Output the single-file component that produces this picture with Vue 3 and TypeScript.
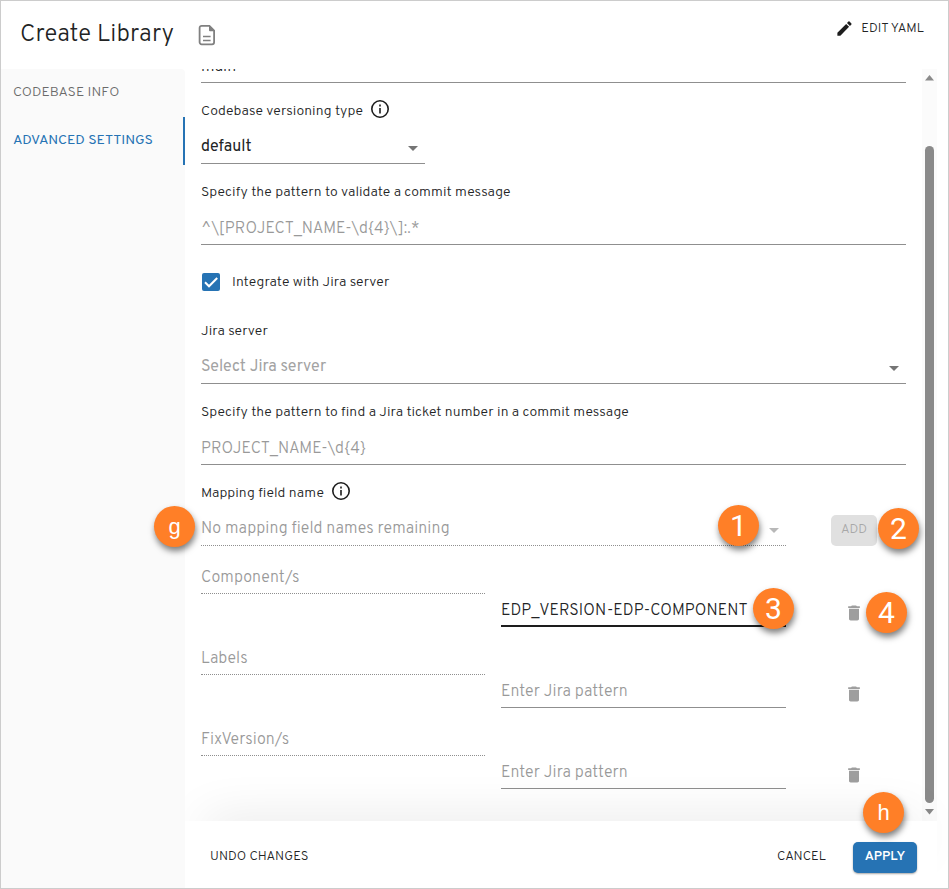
<script setup lang="ts">
import { ref } from 'vue'

interface Mapping {
  name: string
  pattern: string
  focused: boolean
}

interface Marker {
  id: string
  text: string
  letter: boolean
}

const PENCIL =
  'M3 17.25V21h3.75L17.81 9.94l-3.75-3.75L3 17.25zM20.71 7.04c.39-.39.39-1.02 0-1.41l-2.34-2.34a.9959.9959 0 0 0-1.41 0l-1.83 1.83 3.75 3.75 1.83-1.83z'
const TRASH = 'M6 19c0 1.1.9 2 2 2h8c1.1 0 2-.9 2-2V7H6v12zM19 4h-3.5l-1-1h-5l-1 1H5v2h14V4z'

const mappings = ref<Mapping[]>([
  { name: 'Component/s', pattern: 'EDP_VERSION-EDP-COMPONENT', focused: true },
  { name: 'Labels', pattern: '', focused: false },
  { name: 'FixVersion/s', pattern: '', focused: false },
])

const markers: Marker[] = [
  { id: 'g', text: 'g', letter: true },
  { id: 'one', text: '1', letter: false },
  { id: 'two', text: '2', letter: false },
  { id: 'three', text: '3', letter: false },
  { id: 'four', text: '4', letter: false },
  { id: 'h', text: 'h', letter: true },
]
</script>

<template>
  <div class="dialog">
    <header class="header">
      <h1 class="title">Create Library</h1>
      <svg class="doc" viewBox="0 0 18 22">
        <path
          class="doc-outline"
          d="M3.6 1.9h7.7l4.8 4.8v11.6a2 2 0 0 1-2 2H3.6a2 2 0 0 1-2-2V3.9a2 2 0 0 1 2-2z"
        />
        <path class="doc-fold" d="M11 1.2h.8l5 5.2v.9H12a1 1 0 0 1-1-1z" />
        <path class="doc-lines" d="M5 12.5h7.6M5 16.5h7.6" />
      </svg>
      <button class="edit">
        <svg class="pencil" viewBox="0 0 24 24"><path :d="PENCIL" /></svg>
        <span>EDIT YAML</span>
      </button>
    </header>

    <div class="body">
      <nav class="tabs">
        <button class="tab">CODEBASE INFO</button>
        <button class="tab active">ADVANCED SETTINGS</button>
      </nav>

      <main class="main">
        <div class="scroll">
          <form class="form">
            <div class="clipped"><div class="control">main</div></div>

            <div class="field">
              <div class="label">
                Codebase versioning type
                <svg class="info" viewBox="0 0 20 20">
                  <circle cx="10" cy="10" r="8.2" />
                  <path d="M10 9v5.5M10 5.6v1.8" />
                </svg>
              </div>
              <div class="control select short">default<i class="caret" /></div>
            </div>

            <div class="field">
              <div class="label">Specify the pattern to validate a commit message</div>
              <div class="control hint">^\[PROJECT_NAME-\d{4}\]:.*</div>
            </div>

            <div class="check">
              <svg class="box" viewBox="0 0 18 18">
                <rect width="18" height="18" rx="2" />
                <path d="M3 9.3l4 4 8.2-8.3" />
              </svg>
              <span>Integrate with Jira server</span>
            </div>

            <div class="field">
              <div class="label">Jira server</div>
              <div class="control select faded">Select Jira server<i class="caret" /></div>
            </div>

            <div class="field">
              <div class="label">Specify the pattern to find a Jira ticket number in a commit message</div>
              <div class="control hint">PROJECT_NAME-\d{4}</div>
            </div>

            <div class="field mapping">
              <div class="grow">
                <div class="label">
                  Mapping field name
                  <svg class="info" viewBox="0 0 20 20">
                    <circle cx="10" cy="10" r="8.2" />
                    <path d="M10 9v5.5M10 5.6v1.8" />
                  </svg>
                </div>
                <div class="control select hint dotted">No mapping field names remaining<i class="caret pale" /></div>
              </div>
              <div class="side"><button class="add">ADD</button></div>
            </div>

            <div v-for="m in mappings" :key="m.name" class="pair">
              <div class="control hint dotted name">{{ m.name }}</div>
              <div class="control pattern" :class="m.focused ? 'focused' : 'hint'">
                {{ m.pattern || 'Enter Jira pattern' }}
              </div>
              <div class="side">
                <svg class="trash" viewBox="0 0 24 24"><path :d="TRASH" /></svg>
              </div>
            </div>
          </form>

          <div class="scrollbar">
            <svg class="arrow" viewBox="0 0 9 6"><path d="M0 5.5L4.5 0 9 5.5z" /></svg>
            <div class="thumb" />
            <svg class="arrow" viewBox="0 0 9 6"><path d="M0 0L4.5 5.5 9 0z" /></svg>
          </div>
        </div>

        <footer class="footer">
          <button class="plain undo">UNDO CHANGES</button>
          <button class="plain cancel">CANCEL</button>
          <button class="apply">APPLY</button>
        </footer>
      </main>
    </div>

    <span v-for="k in markers" :key="k.id" class="marker" :class="['m-' + k.id, { letter: k.letter }]">{{ k.text }}</span>
  </div>
</template>

<style>
body {
  background: #fff;
}
</style>

<style scoped>
* {
  box-sizing: border-box;
}
.dialog {
  position: relative;
  display: flex;
  flex-direction: column;
  width: 949px;
  height: 889px;
  border: 1px solid #cccccc;
  background: #fff;
  color: #222324;
  font-family: Overpass, Roboto, sans-serif;
  font-weight: 300;
  letter-spacing: 0.07px;
  overflow: hidden;
}
button {
  padding: 0;
  border: 0;
  background: none;
  color: inherit;
  font: inherit;
  letter-spacing: inherit;
}
svg {
  display: block;
  flex: none;
}
.header {
  display: flex;
  align-items: center;
  height: 68px;
  flex: none;
  padding: 0 24px 0 19px;
}
.title {
  width: 154px;
  margin: 0;
  font-size: 24px;
  font-weight: 300;
  letter-spacing: 0.14px;
  line-height: 32px;
  white-space: nowrap;
}
.doc {
  width: 18px;
  height: 22px;
  margin-left: 24px;
}
.doc-outline {
  fill: none;
  stroke: #808080;
  stroke-width: 1.8;
}
.doc-fold {
  fill: #808080;
}
.doc-lines {
  stroke: #808080;
  stroke-width: 1.3;
}
.edit {
  display: flex;
  align-items: center;
  gap: 7px;
  margin: 0 0 13px auto;
  font-size: 13px;
}
.pencil {
  width: 19px;
  height: 19px;
}
.pencil path {
  fill: #1d1d1d;
}
.body {
  display: flex;
  flex: 1;
  min-height: 0;
}
.tabs {
  display: flex;
  flex-direction: column;
  width: 184px;
  border-top-right-radius: 4px;
  background: #fafafa;
}
.tab {
  height: 48px;
  padding: 0 0 1px 12px;
  border-right: 2px solid transparent;
  color: #6a6a6a;
  font-size: 14px;
  text-align: left;
}
.active {
  color: #2673b4;
  font-weight: 400;
  letter-spacing: 0;
  border-right-color: #2673b4;
}
.main {
  display: flex;
  flex-direction: column;
  flex: 1;
  overflow: hidden;
}
.scroll {
  display: flex;
  height: 752px;
}
.form {
  width: 721px;
  flex: none;
  padding-left: 16px;
}
.clipped {
  display: flex;
  flex-direction: column;
  justify-content: flex-end;
  height: 14px;
  overflow: hidden;
}
.field {
  height: 81px;
}
.label {
  display: flex;
  align-items: center;
  gap: 7px;
  height: 45px;
  padding-top: 11px;
  font-size: 14px;
  white-space: nowrap;
}
.info {
  width: 20px;
  height: 20px;
  margin-top: -4px;
  fill: none;
  stroke: #1d1d1d;
  stroke-width: 1.6;
}
.control {
  display: flex;
  align-items: center;
  justify-content: space-between;
  flex: none;
  height: 36px;
  padding: 4px 7px 0 0;
  border-bottom: 1px solid #8f8f8f;
  font-size: 16px;
  line-height: 20px;
  white-space: nowrap;
}
.select {
  padding-top: 2px;
}
.short {
  width: 224px;
  font-weight: 400;
}
.hint {
  color: #999;
}
.faded {
  color: #a3a3a3;
  font-weight: 400;
  letter-spacing: 0;
}
.dotted {
  border-bottom-style: dotted;
}
.caret {
  margin-top: 4px;
  border: 5px solid transparent;
  border-top-color: #757575;
  border-bottom: 0;
}
.pale {
  border-top-color: #b8b8b8;
}
.check {
  display: flex;
  align-items: center;
  gap: 12px;
  height: 58px;
  padding: 16px 0 0 1px;
  font-size: 14px;
}
.box {
  width: 18px;
  height: 18px;
}
.box rect {
  fill: #2673b4;
}
.box path {
  fill: none;
  stroke: #fff;
  stroke-width: 2;
}
.mapping {
  display: flex;
}
.grow {
  width: 585px;
  flex: none;
}
.side {
  display: flex;
  align-items: flex-end;
  justify-content: center;
  flex: 1;
  padding-left: 16px;
}
.add {
  width: 46px;
  height: 31px;
  padding-bottom: 1px;
  border-radius: 5px;
  background: #e0e0e0;
  color: #a8a8a8;
  font-size: 13px;
}
.pair {
  display: flex;
  height: 81px;
}
.name {
  width: 284px;
  height: 48px;
  padding-top: 16px;
}
.pattern {
  align-self: flex-end;
  width: 285px;
  margin-left: 16px;
}
.focused {
  padding-top: 5px;
  border-bottom: 2px solid #1d1d1d;
  letter-spacing: 0.11px;
}
.trash {
  width: 20px;
  height: 20px;
  margin-bottom: 4px;
}
.trash path {
  fill: #9e9e9e;
}
.scrollbar {
  display: flex;
  flex-direction: column;
  align-items: center;
  width: 15px;
  margin-left: 16px;
  padding: 6px 0;
  background: #fbfbfb;
}
.arrow {
  width: 9px;
  height: 6px;
}
.arrow path {
  fill: #8a8a8a;
}
.thumb {
  width: 9px;
  height: 657px;
  margin: 65px 0 6px;
  border-radius: 5px;
  background: #8a8a8a;
}
.footer {
  position: relative;
  display: flex;
  align-items: center;
  flex: 1;
  width: 752px;
  padding: 5px 20px 0 25px;
  background: #fff;
  box-shadow: 0 -20px 50px -20px rgba(0, 0, 0, 0.12);
}
.plain {
  font-size: 13px;
}
.cancel {
  margin-left: auto;
}
.apply {
  width: 64px;
  height: 31px;
  margin-top: 1px;
  margin-left: 27px;
  padding-bottom: 1px;
  border-radius: 5px;
  background: #2673b4;
  box-shadow: 0 1px 2px rgba(0, 0, 0, 0.35);
  color: #fff;
  font-size: 13px;
  font-weight: 600;
}
.marker {
  position: absolute;
  display: flex;
  align-items: center;
  justify-content: center;
  width: 41px;
  height: 41px;
  border-radius: 50%;
  background: #ff7f27;
  box-shadow: 1px 4px 6px rgba(0, 0, 0, 0.5);
  color: #fff;
  font: 30px/41px Roboto, sans-serif;
  letter-spacing: 0;
}
.letter {
  font-family: 'Liberation Sans', sans-serif;
  font-size: 22px;
}
.m-g {
  left: 153px;
  top: 505px;
}
.m-one {
  left: 717px;
  top: 504px;
}
.m-two {
  left: 877px;
  top: 507px;
}
.m-three {
  left: 752px;
  top: 587px;
}
.m-four {
  left: 865px;
  top: 591px;
}
.m-h {
  left: 862px;
  top: 791px;
}
</style>
